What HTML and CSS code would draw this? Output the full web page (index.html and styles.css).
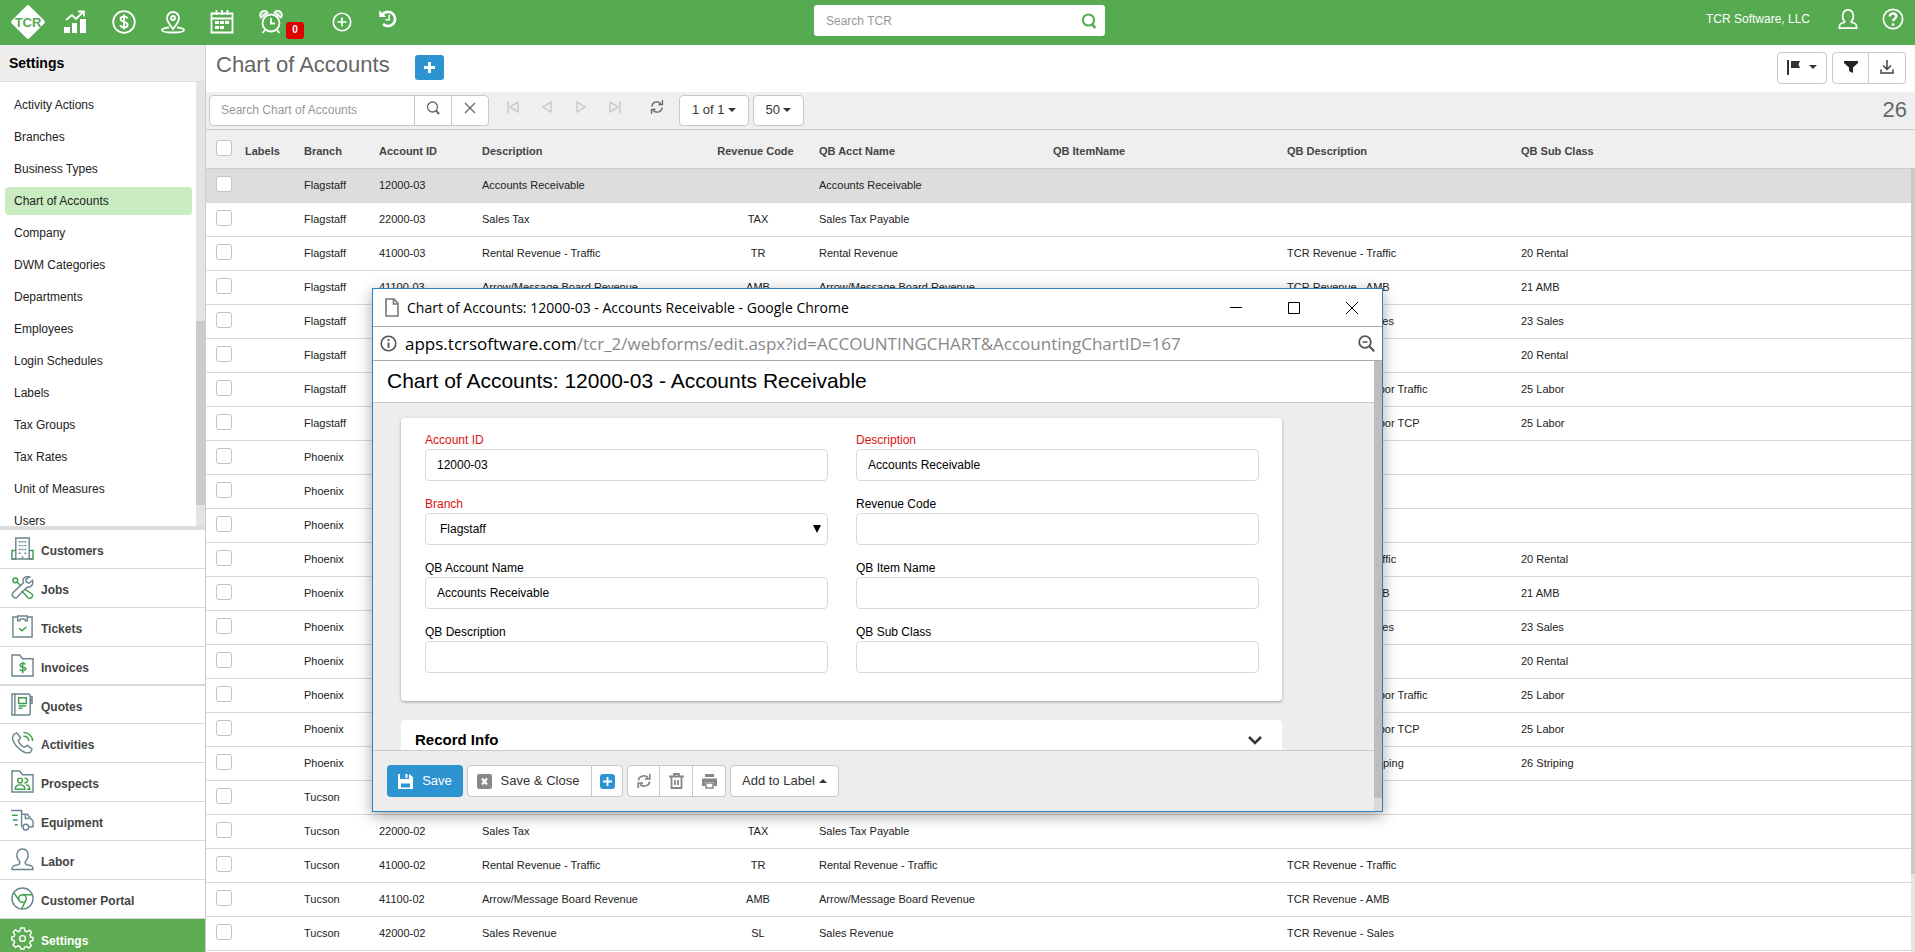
FILE: index.html
```html
<!DOCTYPE html>
<html lang="en">
<head>
<meta charset="utf-8">
<title>Chart of Accounts</title>
<link rel="stylesheet" href="styles.css">
</head>
<body>
<header class="topbar">
  <div class="topbar-left">
    <a class="logo" href="#" aria-label="TCR home"><svg width="38" height="38" viewBox="0 0 38 38"><rect x="6.500" y="6.500" width="25" height="25" rx="2" transform="rotate(45 19 19)" fill="#fff"/><text x="19" y="24" text-anchor="middle" class="logo-text">TCR</text></svg></a>
    <a href="#" aria-label="Dashboard"><svg class="ic" viewBox="0 0 24 24"><path class="fill" d="M1 17h6v6H1zM9 13h5v10H9zM17 9h6v14h-6z"/><path d="M3 10l6-5 4 4 7-7M15 1.500h6v5"/></svg></a>
    <a href="#" aria-label="Accounting"><svg class="ic" viewBox="0 0 24 24"><circle cx="12" cy="12" r="10.800"/><path d="M15.500 8.500c-.5-1.300-1.800-2-3.500-2-2 0-3.500 1-3.500 2.600 0 3.600 7.200 2 7.200 5.700 0 1.700-1.600 2.700-3.700 2.700-1.900 0-3.400-.9-3.800-2.400M12 4.500v15"/></svg></a>
    <a href="#" aria-label="Map"><svg class="ic" viewBox="0 0 24 24"><path d="M12 19c-3-4-6-7-6-11a6 6 0 0 1 12 0c0 4-3 7-6 11z"/><circle cx="12" cy="8" r="2"/><path d="M8 17.500c-4 .3-7 1.200-7 2.500 0 1.600 5 2.500 11 2.500s11-.9 11-2.500c0-1.300-3-2.200-7-2.500"/></svg></a>
    <a href="#" aria-label="Calendar"><svg class="ic" viewBox="0 0 24 24"><path d="M1.500 3.500h21v19h-21zM1.500 8.500h21M6.500 0v5M12 0v5M17.500 0v5"/><path class="fill" d="M5 11h4v3H5zM10 11h4v3h-4zM15 11h4v3h-4zM5 16h4v3H5zM10 16h4v3h-4z"/></svg></a>
    <a class="alarm" href="#" aria-label="Reminders"><svg class="ic" viewBox="0 0 24 24"><circle cx="12" cy="13" r="8.500"/><path d="M12 8v5.500h4M6 20l-2.500 3M18 20l2.500 3"/><path d="M2 7.500a4 4 0 0 1 6.500-5zM22 7.500a4 4 0 0 0-6.500-5z" fill="#fff" fill-opacity=".4"/></svg><span class="badge">0</span></a>
    <a class="add" href="#" aria-label="Add"><svg class="ic" viewBox="0 0 24 24"><circle cx="12" cy="12" r="9.500"/><path d="M12 7v10M7 12h10"/></svg></a>
    <a class="history" href="#" aria-label="History"><svg class="ic ic-lift" viewBox="0 0 24 24"><path stroke-width="3.200" d="M5.500 6.500A8.500 8.500 0 1 1 6 18"/><path class="fill" d="M1.500 1.500l8.500 8h-8.500z"/><path d="M13.500 7v6H9"/></svg></a>
  </div>
  <form class="topsearch"><input type="text" placeholder="Search TCR" aria-label="Search TCR"><button type="button" aria-label="Search"><svg width="16" height="16" viewBox="0 0 16 16"><circle cx="7.500" cy="7" r="5.600"/><path d="M11.300 11.500l3 3.500" stroke-width="2.600"/></svg></button></form>
  <div class="topbar-right">
    <a class="company" href="#">TCR Software, LLC</a>
    <a href="#" aria-label="Profile"><svg class="ic" viewBox="0 0 24 24"><path d="M9 15.500C3.500 16.500 2.500 17.500 2.500 22h19c0-4.500-1-5.500-6.500-6.500M9 15.500C3.700 10 6.500 2 12 2s8.300 8 3 13.500"/></svg></a>
    <a href="#" aria-label="Help"><svg class="ic" viewBox="0 0 24 24"><circle cx="12" cy="12" r="10.500"/><path d="M8.500 9.200C8.500 7 10 6 12 6s3.600 1.200 3.600 3.100c0 2.400-3.600 2.600-3.600 5.300" stroke-width="2.600"/><path d="M12 16.800v2.400" stroke-width="3"/></svg></a>
  </div>
</header>

<div class="shell">
  <aside class="sidebar">
    <h2 class="side-title">Settings</h2>
    <div class="side-scroll">
      <ul class="side-list">
        <li><a href="#">Activity Actions</a></li>
        <li><a href="#">Branches</a></li>
        <li><a href="#">Business Types</a></li>
        <li><a class="active" href="#">Chart of Accounts</a></li>
        <li><a href="#">Company</a></li>
        <li><a href="#">DWM Categories</a></li>
        <li><a href="#">Departments</a></li>
        <li><a href="#">Employees</a></li>
        <li><a href="#">Login Schedules</a></li>
        <li><a href="#">Labels</a></li>
        <li><a href="#">Tax Groups</a></li>
        <li><a href="#">Tax Rates</a></li>
        <li><a href="#">Unit of Measures</a></li>
        <li><a href="#">Users</a></li>
      </ul>
      <div class="side-track"><div class="side-thumb"></div></div>
    </div>
    <nav class="modules">
      <a href="#"><svg viewBox="0 0 24 24"><path class="g" d="M5 14H1v9h4M19 14h4v9h-4"/><path d="M5 1h14v22H5zM1 23h22M12 23v-3"/><path d="M8 5h2M11 5h2M14 5h2M8 9h2M11 9h2M14 9h2M8 13h2M11 13h2M14 13h2M8 17h2M14 17h2"/></svg>Customers</a>
      <a href="#"><svg viewBox="0 0 24 24"><circle class="g" cx="4.500" cy="4.500" r="2.500"/><path class="g" d="M6.500 6.500l4 4M14 13.500l7.500 5a2.600 2.600 0 0 1-4 4L11 15.500"/><path d="M22.500 4.500l-3.500 3-3-1-.5-3 4-2.500c-5-1.500-8 2-6.500 6L2 17.500a3.200 3.200 0 0 0 4.500 4.500L17 11.500c4 1 6.500-3 5.500-7z"/></svg>Jobs</a>
      <a href="#"><svg viewBox="0 0 24 24"><path d="M7 2H2v21h20V2h-5"/><path d="M7 1v5h2a3 2 0 0 1 6 0h2V1z"/><path class="g" d="M8.500 14l3 2.500 4.500-4"/></svg>Tickets</a>
      <a class="group-end" href="#"><svg viewBox="0 0 24 24"><path d="M1 23V1h8l3 4h11v18z"/><path class="g" d="M15 11c-1-2-6-1.500-5.500 1s6 1 6 3.500-5.500 2.500-6.500.5M12.200 8v12"/></svg>Invoices</a>
      <a class="group-start" href="#"><svg viewBox="0 0 24 24"><path d="M1 1h17q2 0 2 2v18q0 2-2 2H1zM4 1v22M20 4h2v3h-2M20 8h2v3h-2"/><path class="g" d="M8 5h8v6H8zM8 13.500h8M8 16h4"/></svg>Quotes</a>
      <a href="#"><svg viewBox="0 0 24 24"><path d="M3 3.500L6 2l4 5-2.500 3c1 3 3 5.500 6.500 7l3-2 5 4-1.500 3c-4 2-9.500-.5-14-5.500S0 7 3 3.500z"/><path class="g" d="M13 1.500c5.500 0 9.500 4 9.500 9M13 5.500c3.500 0 5.500 2 5.500 5"/></svg>Activities</a>
      <a href="#"><svg viewBox="0 0 24 24"><path d="M1 23V1h8l3 4h11v18z"/><circle class="g" cx="9.500" cy="11" r="2.500"/><path class="g" d="M4.500 20c0-3 2-4.500 5-4.500s5 1.500 5 4.500zM14 8.500c4.500 0 4.500 5 0 5M15.500 15.500c2.500 0 4 1.500 4 4.500h-3"/></svg>Prospects</a>
      <a href="#"><svg viewBox="0 0 24 24"><path d="M0 1.500h11v17M11 5.500h6l4 5 2 2v6h-4M11 18.500h1M15 6v4h4"/><circle cx="15.500" cy="19" r="3"/><path class="g" d="M1 6.500h6M2 11.500h5M4 16.500h3"/></svg>Equipment</a>
      <a href="#"><svg viewBox="0 0 24 24"><path d="M9 14C4 9 6 1 12 1s8 8 3 13c-.5 2 0 3 1.500 3.500C22 18.500 23 19 23 22.500H1c0-3.500 1-4 6.500-5C9 17 9.500 16 9 14z"/></svg>Labor</a>
      <a href="#"><svg viewBox="0 0 24 24"><circle cx="12" cy="12" r="11"/><circle class="g" cx="12" cy="12" r="4"/><path class="g" d="M12 8h10M8.500 14L3 6M15.500 14L11 23"/></svg>Customer Portal</a>
      <a class="current" href="#"><svg viewBox="0 0 24 24"><circle cx="12" cy="12" r="3"/><path d="M10 1h4l.6 3.200 2 .8L19.400 3.300l2 2.300-1.600 3 .8 1.900 2.400.5v3l-2.600.8-.8 1.900 1.600 2.700-2.500 2.500-2.700-1.600-2 .8L13.500 23h-3.300l-.8-2.600-2-.8-2.700 1.600-2.500-2.500 1.600-2.700-.8-2-2.200-.5v-3l2.400-.7.800-2-1.700-2.500 2.500-2.500L7.400 5l2-.8z"/></svg>Settings</a>
    </nav>
  </aside>

  <main class="main">
    <div class="page-head">
      <h1>Chart of Accounts</h1>
      <button class="btn-add" type="button" aria-label="Add account"><svg width="11" height="11" viewBox="0 0 11 11"><path d="M5.500 0v11M0 5.500h11" stroke="#fff" stroke-width="3"/></svg></button>
      <div class="head-tools">
        <button class="btn flag" type="button" aria-label="Flag"><svg width="14" height="16" viewBox="0 0 14 16"><path d="M0 1h2v15H0zM4 2h9l-1.500 3.500L13 9H4z" fill="#333"/></svg><span class="caret"></span></button>
        <div class="btn-group">
          <button class="btn" type="button" aria-label="Filter"><svg width="14" height="14" viewBox="0 0 14 14"><path d="M0 1h14v2L9 7.500V13l-4-2V7.500L0 3z" fill="#222"/></svg></button>
          <button class="btn" type="button" aria-label="Download"><svg width="14" height="14" viewBox="0 0 14 14" fill="none" stroke="#444" stroke-width="1.500"><path d="M7 0v9M3 5.500l4 4 4-4M1 9.500V13h12V9.500"/></svg></button>
        </div>
      </div>
    </div>

    <div class="toolbar">
      <form class="search-group">
        <input type="text" placeholder="Search Chart of Accounts" aria-label="Search Chart of Accounts">
        <button type="button" aria-label="Search"><svg width="14" height="14" viewBox="0 0 14 14"><circle cx="6.500" cy="6" r="5"/><path d="M10 9.500l3 3.500" stroke-width="2"/></svg></button>
        <button type="button" aria-label="Clear"><svg width="14" height="14" viewBox="0 0 14 14"><path d="M2 2l10 10M12 2L2 12"/></svg></button>
      </form>
      <div class="pager">
        <button type="button" aria-label="First page"><svg viewBox="0 0 12 12"><path d="M1 0v12M11 1v10L3 6z"/></svg></button>
        <button type="button" aria-label="Previous page"><svg viewBox="0 0 12 12"><path d="M10 1v10L2 6z"/></svg></button>
        <button type="button" aria-label="Next page"><svg viewBox="0 0 12 12"><path d="M2 1v10l8-5z"/></svg></button>
        <button type="button" aria-label="Last page"><svg viewBox="0 0 12 12"><path d="M11 0v12M1 1v10l8-5z"/></svg></button>
      </div>
      <button class="reload" type="button" aria-label="Refresh"><svg width="14" height="14" viewBox="0 0 14 14"><path d="M2 6.500C2 2.500 7 0 11 3.500M12 7.500c0 4-5 6.500-9 3M12.500 0v4.500H8.500M1.500 14V9.500h4"/></svg></button>
      <button class="btn pick" type="button">1 of 1<span class="caret"></span></button>
      <button class="btn pick" type="button">50<span class="caret"></span></button>
      <span class="count">26</span>
    </div>

    <div class="grid-wrap">
      <table class="grid">
        <colgroup><col class="c-check"><col class="c-labels"><col class="c-branch"><col class="c-id"><col class="c-desc"><col class="c-rev"><col class="c-wide"><col class="c-wide"><col class="c-wide"><col></colgroup>
        <thead><tr><th><input type="checkbox" aria-label="Select all"></th><th>Labels</th><th>Branch</th><th>Account ID</th><th>Description</th><th class="mid">Revenue Code</th><th>QB Acct Name</th><th>QB ItemName</th><th>QB Description</th><th>QB Sub Class</th></tr></thead>
        <tbody>
          <tr class="selected"><td><input type="checkbox" aria-label="Select row"></td><td></td><td>Flagstaff</td><td>12000-03</td><td>Accounts Receivable</td><td class="mid"></td><td>Accounts Receivable</td><td></td><td></td><td></td></tr>
          <tr><td><input type="checkbox" aria-label="Select row"></td><td></td><td>Flagstaff</td><td>22000-03</td><td>Sales Tax</td><td class="mid">TAX</td><td>Sales Tax Payable</td><td></td><td></td><td></td></tr>
          <tr><td><input type="checkbox" aria-label="Select row"></td><td></td><td>Flagstaff</td><td>41000-03</td><td>Rental Revenue - Traffic</td><td class="mid">TR</td><td>Rental Revenue</td><td></td><td>TCR Revenue - Traffic</td><td>20 Rental</td></tr>
          <tr><td><input type="checkbox" aria-label="Select row"></td><td></td><td>Flagstaff</td><td>41100-03</td><td>Arrow/Message Board Revenue</td><td class="mid">AMB</td><td>Arrow/Message Board Revenue</td><td></td><td>TCR Revenue - AMB</td><td>21 AMB</td></tr>
          <tr><td><input type="checkbox" aria-label="Select row"></td><td></td><td>Flagstaff</td><td></td><td></td><td class="mid"></td><td></td><td></td><td>TCR Revenue - Sales</td><td>23 Sales</td></tr>
          <tr><td><input type="checkbox" aria-label="Select row"></td><td></td><td>Flagstaff</td><td></td><td></td><td class="mid"></td><td></td><td></td><td></td><td>20 Rental</td></tr>
          <tr><td><input type="checkbox" aria-label="Select row"></td><td></td><td>Flagstaff</td><td></td><td></td><td class="mid"></td><td></td><td></td><td>TCR Revenue - Labor Traffic</td><td>25 Labor</td></tr>
          <tr><td><input type="checkbox" aria-label="Select row"></td><td></td><td>Flagstaff</td><td></td><td></td><td class="mid"></td><td></td><td></td><td>TCR Revenue - Labor TCP</td><td>25 Labor</td></tr>
          <tr><td><input type="checkbox" aria-label="Select row"></td><td></td><td>Phoenix</td><td></td><td></td><td class="mid"></td><td></td><td></td><td></td><td></td></tr>
          <tr><td><input type="checkbox" aria-label="Select row"></td><td></td><td>Phoenix</td><td></td><td></td><td class="mid"></td><td></td><td></td><td></td><td></td></tr>
          <tr><td><input type="checkbox" aria-label="Select row"></td><td></td><td>Phoenix</td><td></td><td></td><td class="mid"></td><td></td><td></td><td></td><td></td></tr>
          <tr><td><input type="checkbox" aria-label="Select row"></td><td></td><td>Phoenix</td><td></td><td></td><td class="mid"></td><td></td><td></td><td>TCR Revenue - Traffic</td><td>20 Rental</td></tr>
          <tr><td><input type="checkbox" aria-label="Select row"></td><td></td><td>Phoenix</td><td></td><td></td><td class="mid"></td><td></td><td></td><td>TCR Revenue - AMB</td><td>21 AMB</td></tr>
          <tr><td><input type="checkbox" aria-label="Select row"></td><td></td><td>Phoenix</td><td></td><td></td><td class="mid"></td><td></td><td></td><td>TCR Revenue - Sales</td><td>23 Sales</td></tr>
          <tr><td><input type="checkbox" aria-label="Select row"></td><td></td><td>Phoenix</td><td></td><td></td><td class="mid"></td><td></td><td></td><td></td><td>20 Rental</td></tr>
          <tr><td><input type="checkbox" aria-label="Select row"></td><td></td><td>Phoenix</td><td></td><td></td><td class="mid"></td><td></td><td></td><td>TCR Revenue - Labor Traffic</td><td>25 Labor</td></tr>
          <tr><td><input type="checkbox" aria-label="Select row"></td><td></td><td>Phoenix</td><td></td><td></td><td class="mid"></td><td></td><td></td><td>TCR Revenue - Labor TCP</td><td>25 Labor</td></tr>
          <tr><td><input type="checkbox" aria-label="Select row"></td><td></td><td>Phoenix</td><td></td><td></td><td class="mid"></td><td></td><td></td><td>TCR Revenue - Striping</td><td>26 Striping</td></tr>
          <tr><td><input type="checkbox" aria-label="Select row"></td><td></td><td>Tucson</td><td></td><td></td><td class="mid"></td><td></td><td></td><td></td><td></td></tr>
          <tr><td><input type="checkbox" aria-label="Select row"></td><td></td><td>Tucson</td><td>22000-02</td><td>Sales Tax</td><td class="mid">TAX</td><td>Sales Tax Payable</td><td></td><td></td><td></td></tr>
          <tr><td><input type="checkbox" aria-label="Select row"></td><td></td><td>Tucson</td><td>41000-02</td><td>Rental Revenue - Traffic</td><td class="mid">TR</td><td>Rental Revenue - Traffic</td><td></td><td>TCR Revenue - Traffic</td><td></td></tr>
          <tr><td><input type="checkbox" aria-label="Select row"></td><td></td><td>Tucson</td><td>41100-02</td><td>Arrow/Message Board Revenue</td><td class="mid">AMB</td><td>Arrow/Message Board Revenue</td><td></td><td>TCR Revenue - AMB</td><td></td></tr>
          <tr><td><input type="checkbox" aria-label="Select row"></td><td></td><td>Tucson</td><td>42000-02</td><td>Sales Revenue</td><td class="mid">SL</td><td>Sales Revenue</td><td></td><td>TCR Revenue - Sales</td><td></td></tr>
        </tbody>
      </table>
      <div class="grid-side"><div class="grid-corner"></div><div class="grid-track"><div class="grid-thumb"></div></div></div>
    </div>
  </main>
</div>

<section class="window" role="dialog" aria-label="Edit account">
  <div class="win-title">
    <svg width="14" height="19" viewBox="0 0 14 19"><path d="M1 1h8l4 4.500V18H1zM8.500 1v5H13" fill="none" stroke="#777" stroke-width="1.600"/></svg>
    <span class="win-name">Chart of Accounts: 12000-03 - Accounts Receivable - Google Chrome</span>
    <button type="button" aria-label="Minimize"><svg width="12" height="12" viewBox="0 0 12 12"><path d="M0 5.500h12"/></svg></button>
    <button type="button" aria-label="Maximize"><svg width="12" height="12" viewBox="0 0 12 12"><path d="M.5.5h11v11H.5z"/></svg></button>
    <button type="button" aria-label="Close"><svg width="12" height="12" viewBox="0 0 12 12"><path d="M0 0l12 12M12 0L0 12"/></svg></button>
  </div>
  <div class="win-url">
    <svg width="17" height="17" viewBox="0 0 17 17" fill="none" stroke="#555"><circle cx="8.500" cy="8.500" r="7.300" stroke-width="1.600"/><path d="M8.500 7.500V13M8.500 4v2" stroke-width="1.800"/></svg>
    <span class="url">apps.tcrsoftware.com<span class="path">/tcr_2/webforms/edit.aspx?id=ACCOUNTINGCHART&amp;AccountingChartID=167</span></span>
    <svg class="zoom" width="17" height="17" viewBox="0 0 17 17" fill="none" stroke="#555"><circle cx="7" cy="7" r="5.800" stroke-width="1.800"/><path d="M4.500 7h5" stroke-width="1.500"/><path d="M11.300 11.300l5 5" stroke-width="2.200"/></svg>
  </div>
  <div class="win-page">
    <div class="win-main">
      <h2 class="record-title">Chart of Accounts: 12000-03 - Accounts Receivable</h2>
      <div class="record-body">
        <form class="card">
          <label class="field req">Account ID<input type="text" value="12000-03"></label>
          <label class="field req">Description<input type="text" value="Accounts Receivable"></label>
          <label class="field req">Branch<span class="select-box"><select><option>Flagstaff</option><option>Phoenix</option><option>Tucson</option></select></span></label>
          <label class="field">Revenue Code<input type="text"></label>
          <label class="field">QB Account Name<input type="text" value="Accounts Receivable"></label>
          <label class="field">QB Item Name<input type="text"></label>
          <label class="field">QB Description<input type="text"></label>
          <label class="field">QB Sub Class<input type="text"></label>
        </form>
        <div class="info-card">
          <h3>Record Info</h3>
          <button type="button" aria-label="Expand"><svg width="16" height="10" viewBox="0 0 16 10"><path d="M2 2l6 6 6-6" fill="none" stroke="#333" stroke-width="2.500"/></svg></button>
        </div>
      </div>
      <div class="record-foot">
        <button class="btn save" type="button"><svg width="15" height="15" viewBox="0 0 15 15"><path d="M0 0h2v5h9V0l4 3v12H0z" fill="#fff"/><path d="M7.500 0h2v4h-2z" fill="#fff"/><path d="M3 9.500h9v4H3z" fill="#2e93d1"/></svg>Save</button>
        <div class="btn-group">
          <button class="btn close" type="button"><svg width="15" height="15" viewBox="0 0 15 15"><rect width="15" height="15" rx="2" fill="#888"/><path d="M5 4.500l5 6M10 4.500l-5 6" stroke="#fff" stroke-width="2"/></svg>Save &amp; Close</button>
          <button class="btn tool-narrow" type="button" aria-label="Save and new"><svg width="15" height="15" viewBox="0 0 15 15"><rect width="15" height="15" rx="3" fill="#2e93d1"/><path d="M7.500 3v9M3 7.500h9" stroke="#fff" stroke-width="1.800"/></svg></button>
        </div>
        <div class="btn-group">
          <button class="btn tool" type="button" aria-label="Refresh"><svg width="14" height="14" viewBox="0 0 14 14" fill="none" stroke="#888" stroke-width="1.700"><path d="M1.500 6.500C1.500 2.500 7 0 11 3.500M12.500 7.500c0 4-5.500 6.500-9.500 3M12.800 0v4.800H8M1.200 14V9.200H6"/></svg></button>
          <button class="btn tool" type="button" aria-label="Delete"><svg width="15" height="16" viewBox="0 0 15 16" fill="none" stroke="#888" stroke-width="1.800"><path d="M0 3.500h15M2.500 3.500V15h10V3.500M5 3V1h5v2M6 7v5M9 7v5"/></svg></button>
          <button class="btn tool" type="button" aria-label="Print"><svg width="15" height="15" viewBox="0 0 15 15"><path d="M3 0h9v3H3zM0 4.500h15V12h-3V8H3v4H0z" fill="#888"/><path d="M4 9h7v5H4z" fill="#fff" stroke="#888" stroke-width="1.500"/></svg></button>
        </div>
        <button class="btn label-btn" type="button">Add to Label<span class="caret up"></span></button>
      </div>
    </div>
    <div class="win-track"><div class="win-thumb"></div></div>
  </div>
</section>
</body>
</html>
```
FILE: styles.css
```css
* { box-sizing: border-box; }

body {
  margin: 0;
  height: 100vh;
  display: flex;
  flex-direction: column;
  overflow: hidden;
  font: 12px/16px "Liberation Sans", Arial, sans-serif;
  color: #222;
  background: #fff;
}

a { color: inherit; text-decoration: none; }
h1, h2, h3, ul { margin: 0; padding: 0; font-weight: normal; }
ul { list-style: none; }
button, input, select { font: inherit; color: inherit; margin: 0; }
button { padding: 0; border: 0; background: none; display: flex; align-items: center; justify-content: center; }
svg { display: block; flex: none; }

/* Top bar */
.topbar {
  flex: none;
  height: 45px;
  display: grid;
  grid-template-columns: 1fr 291px 1fr;
  padding: 0 5px 0 9px;
  background: #56aa50;
}
.topbar-left, .topbar-right { display: flex; align-items: center; height: 43px; }
.topbar-left { gap: 25px; }
.logo { margin-right: -9px; }
.logo-text { font-size: 13px; font-weight: bold; fill: #56aa50; }
.ic { width: 24px; height: 24px; fill: none; stroke: #fff; stroke-width: 1.800; }
.ic .fill { fill: #fff; stroke: none; }
.alarm { display: flex; gap: 3px; }
.badge {
  align-self: end;
  margin-bottom: -5px;
  width: 18px;
  height: 17px;
  border-radius: 3px;
  background: #e00000;
  color: #fff;
  font-size: 10px;
  font-weight: bold;
  text-align: center;
}
.add { margin-left: 2px; }
.add .ic { width: 22px; height: 22px; }
.history .ic { width: 20px; height: 20px; }
.ic-lift { margin-bottom: 5px; }
.topsearch {
  display: flex;
  align-self: start;
  margin-top: 5px;
  height: 31px;
  border-radius: 3px;
  background: #fff;
}
.topsearch input { flex: 1; min-width: 0; padding: 0 12px; border: 0; background: none; }
.topsearch button { width: 33px; }
.topsearch svg { fill: none; stroke: #56aa50; stroke-width: 2; }
::placeholder { color: #999; opacity: 1; }
.topbar-right { justify-content: flex-end; gap: 23px; height: 38px; padding-right: 6px; color: #fff; }
.topbar-right .ic { width: 22px; height: 22px; }
.company { margin-right: 4px; }

/* Shell */
.shell { flex: 1; min-height: 0; display: flex; }

/* Sidebar */
.sidebar {
  flex: none;
  width: 206px;
  display: flex;
  flex-direction: column;
  overflow: hidden;
  border-right: 1px solid #ccc;
}
.side-title {
  flex: none;
  height: 37px;
  padding: 0 9px;
  border-bottom: 1px solid #ddd;
  background: #ededed;
  color: #000;
  font-size: 14px;
  font-weight: bold;
  line-height: 36px;
}
.side-scroll { flex: 1; min-height: 0; display: flex; overflow: hidden; }
.side-list { flex: 1; padding: 9px 4px 0 5px; display: flex; flex-direction: column; gap: 4px; }
.side-list a { display: block; padding: 0 9px; border-radius: 4px; line-height: 28px; }
.side-list .active { background: #c9edc1; }
.side-track { width: 9px; background: #e4e4e4; padding-top: 239px; }
.side-thumb { height: 184px; background: #cbcbcb; }
.modules { flex: none; margin-bottom: -6px; border-top: 4px solid #ddd; }
.modules a {
  height: 39px;
  display: flex;
  align-items: center;
  gap: 7px;
  padding: 4px 11px 0;
  border-bottom: 1px solid #d9d9d9;
  color: #444;
  font-weight: bold;
}
.modules svg { width: 23px; height: 23px; margin-bottom: 5px; fill: none; stroke: #6b8590; stroke-width: 1.500; }
.modules .g { stroke: #3f9f4c; }
.modules .group-end { border-bottom-width: 2px; }
.modules .group-start { height: 38px; }
.modules .current { border: 0; background: #5dab53; color: #fff; }
.modules .current svg { stroke: #fff; }

/* Page head */
.main { flex: 1; min-width: 0; display: flex; flex-direction: column; }
.page-head { flex: none; height: 47px; display: flex; align-items: start; padding: 7px 9px 0 10px; }
h1 { color: #666; font-size: 22px; line-height: 26px; }
.btn-add { margin: 3px 0 0 25px; width: 29px; height: 25px; border-radius: 3px; background: #2e93d1; }
.head-tools { margin-left: auto; display: flex; gap: 5px; }
.btn { height: 32px; border: 1px solid #c8c8c8; border-radius: 4px; background: #fff; color: #333; }
.btn-group { display: flex; }
.btn-group .btn { border-radius: 0; }
.btn-group .btn:first-child { border-radius: 4px 0 0 4px; }
.btn-group .btn:last-child { border-radius: 0 4px 4px 0; }
.btn-group .btn + .btn { border-left: 0; }
.head-tools .btn { width: 37px; padding-bottom: 2px; }
.head-tools .flag { width: 50px; gap: 8px; }
.caret { border: 4px solid transparent; border-top-color: #333; border-bottom: 0; }
.caret.up { border-bottom: 4px solid #333; border-top: 0; }

/* Toolbar */
.toolbar {
  flex: none;
  height: 38px;
  display: flex;
  align-items: center;
  padding: 0 8px 1px 3px;
  border-bottom: 1px solid #ccc;
  background: #efefef;
}
.toolbar svg { fill: none; stroke: #666; stroke-width: 1.300; }
.search-group { display: flex; height: 31px; border: 1px solid #c8c8c8; border-radius: 4px; background: #fff; }
.search-group input { width: 204px; padding: 0 11px; border: 0; background: none; }
.search-group button { width: 37px; border-left: 1px solid #c8c8c8; padding-bottom: 4px; }
.pager { display: flex; margin: 0 18px 0 7px; padding-bottom: 6px; }
.pager button { width: 34px; }
.pager svg { width: 12px; height: 12px; stroke: #c4c4c4; }
.reload { margin-right: 15px; padding-bottom: 6px; }
.toolbar .pick { height: 31px; margin-right: 4px; padding: 0 12px; gap: 3px; font-size: 13px; }
.count { margin-left: auto; color: #666; font-size: 22px; }

/* Data grid */
.grid-wrap { flex: 1; min-height: 0; display: flex; overflow: hidden; }
.grid { flex: 1; width: 100%; align-self: start; table-layout: fixed; border-collapse: separate; border-spacing: 0; font-size: 11px; }
.c-check { width: 39px; }
.c-labels { width: 59px; }
.c-branch { width: 75px; }
.c-id { width: 103px; }
.c-desc { width: 217px; }
.c-rev { width: 120px; }
.c-wide { width: 234px; }
.grid th, .grid td { padding: 0; text-align: left; white-space: nowrap; vertical-align: middle; }
.grid th { height: 39px; padding-top: 4px; border-bottom: 1px solid #ccc; background: #efefef; color: #444; font-weight: bold; }
.grid td { height: 34px; padding-bottom: 2px; border-bottom: 1px solid #d9d9d9; color: #222; }
.grid .mid { text-align: center; }
.grid td.mid { padding-right: 2px; }
.grid th.mid { padding-right: 7px; }
.grid th:first-child, .grid td:first-child { padding: 0 0 3px 10px; }
.selected td { background: #ddd; }
.grid input {
  appearance: none;
  display: block;
  width: 16px;
  height: 16px;
  border: 1px solid #c4c4c4;
  border-radius: 3px;
  background: #fff;
}
.grid-side { flex: none; width: 4px; display: flex; flex-direction: column; }
.grid-corner { height: 39px; background: #efefef; border-bottom: 1px solid #ccc; }
.grid-track { flex: 1; background: #e4e4e4; }
.grid-thumb { height: 90%; background: #c8c8c8; }

/* Floating record window */
.window {
  position: absolute;
  left: 372px;
  top: 288px;
  width: 1011px;
  height: 524px;
  display: flex;
  flex-direction: column;
  border: 1px solid #2a82c4;
  background: #fff;
  box-shadow: 0 4px 14px rgba(0, 0, 0, .35);
  color: #000;
}
.win-title { flex: none; height: 38px; display: flex; align-items: center; padding: 0 1px 0 12px; border-bottom: 1px solid #aaa; font-family: "Open Sans", sans-serif; font-size: 14px; }
.win-name { margin-left: 8px; margin-right: auto; white-space: nowrap; }
.win-title button { width: 58px; height: 36px; }
.win-title button svg { fill: none; stroke: #000; }
.win-url { flex: none; height: 34px; display: flex; align-items: center; padding: 0 7px; border-bottom: 1px solid #aaa; font-family: "Open Sans", sans-serif; font-size: 17px; }
.url { margin-left: 8px; white-space: nowrap; }
.path { color: #888; }
.zoom { margin-left: auto; }
.win-page { flex: 1; min-height: 0; display: flex; }
.win-main { flex: 1; min-width: 0; display: flex; flex-direction: column; background: #ededed; }
.record-title { flex: none; height: 42px; padding: 0 14px; border-bottom: 1px solid #ccc; background: #fff; font-size: 21px; line-height: 40px; }
.record-body { flex: 1; min-height: 0; overflow: hidden; padding: 15px 92px 0 28px; }
.card {
  display: grid;
  grid-template-columns: 1fr 1fr;
  gap: 14px 28px;
  padding: 13px 23px 28px 24px;
  border-radius: 4px;
  background: #fff;
  box-shadow: 0 1px 3px rgba(0, 0, 0, .35);
}
.field { display: block; line-height: 18px; }
.req { color: #d9140f; }
.field input, .field select {
  display: block;
  width: 100%;
  height: 32px;
  padding: 0 11px;
  border: 1px solid #d9d9d9;
  border-radius: 4px;
  background: #fff;
  color: #000;
}
.select-box { position: relative; display: block; }
.select-box select { appearance: none; padding-left: 14px; }
.select-box::after {
  content: "";
  position: absolute;
  right: 7px;
  top: 12px;
  border: 4px solid transparent;
  border-top: 8px solid #000;
  border-bottom: 0;
}
.info-card { display: flex; justify-content: space-between; align-items: center; height: 60px; margin-top: 19px; padding: 0 19px 21px 14px; border-radius: 4px; background: #fff; }
.info-card h3 { font-size: 15px; font-weight: bold; }
.record-foot { flex: none; height: 61px; display: flex; align-items: start; padding: 14px; gap: 4px; border-top: 1px solid #ccc; font-size: 13px; }
.record-foot .btn { gap: 9px; }
.record-foot .save { width: 76px; border: 0; background: #2e93d1; color: #fff; }
.record-foot .close { width: 125px; padding-right: 3px; }
.record-foot .tool-narrow { width: 31px; }
.record-foot .tool { width: 33px; }
.record-foot .label-btn { width: 109px; gap: 4px; }
.win-track { flex: none; width: 8px; background: #d9d9d9; }
.win-thumb { height: 97%; background: #bdbdbd; }
```
